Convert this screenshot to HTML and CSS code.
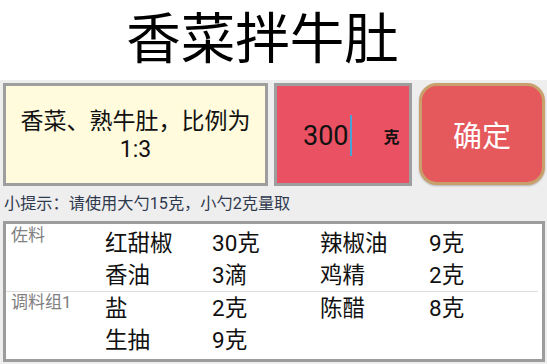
FILE: index.html
```html
<!DOCTYPE html>
<html lang="zh">
<head>
<meta charset="utf-8">
<title>香菜拌牛肚</title>
<link rel="stylesheet" href="styles.css">
</head>
<body>
<header class="header"><h1 class="title">香菜拌牛肚</h1></header>
<main class="main">
  <div class="toprow">
    <div class="ratio">香菜、熟牛肚，比例为<br>1:3</div>
    <div class="amount"><span class="num">300</span><span class="cursor"></span><span class="unit">克</span></div>
    <button class="ok">确定</button>
  </div>
  <p class="hint">小提示：请使用大勺15克，小勺2克量取</p>
  <div class="table">
    <div class="group first">
      <div class="label">佐料</div>
      <div class="items">
        <span>红甜椒</span><span>30克</span><span>辣椒油</span><span>9克</span>
        <span>香油</span><span>3滴</span><span>鸡精</span><span>2克</span>
      </div>
    </div>
    <div class="sep"></div>
    <div class="group">
      <div class="label">调料组1</div>
      <div class="items">
        <span>盐</span><span>2克</span><span>陈醋</span><span>8克</span>
        <span>生抽</span><span>9克</span>
      </div>
    </div>
  </div>
</main>
</body>
</html>
```

FILE: styles.css
```css
* { box-sizing: border-box; }
html, body { margin: 0; padding: 0; }
body {
  width: 547px;
  height: 364px;
  overflow: hidden;
  font-family: Roboto, "Noto Sans CJK SC", sans-serif;
  background: #eeeeee;
}
.header {
  height: 80px;
  background: #ffffff;
  display: flex;
  align-items: center;
  justify-content: center;
  padding-right: 22px;
}
.title {
  margin: 0;
  font-size: 54.5px;
  font-weight: normal;
  line-height: 1;
  color: #000;
  padding-bottom: 2px;
}
.main {
  padding: 3px 2px 0 3px;
}
.toprow {
  display: flex;
  height: 103px;
}
.ratio {
  width: 265px;
  border: 3px solid #9e9e9e;
  background: #fffbdc;
  display: flex;
  align-items: center;
  justify-content: center;
  text-align: center;
  font-size: 23px;
  line-height: 28px;
  color: #111;
  padding-top: 2px;
}
.amount {
  width: 138px;
  margin-left: 6px;
  border: 3px solid #9e9e9e;
  background: #ea5264;
  display: flex;
  align-items: center;
  padding-left: 26px;
  padding-top: 2px;
}
.num {
  font-size: 27px;
  color: #111;
}
.cursor {
  width: 2px;
  height: 41px;
  background: #4aa3d6;
  margin-left: 1px;
}
.unit {
  font-size: 16px;
  font-weight: bold;
  color: #111;
  margin-left: 32px;
}
.ok {
  width: 126px;
  height: 102px;
  margin-left: 7px;
  border: 3px solid #c9a06c;
  border-radius: 18px;
  background: #e5585b;
  color: #ffffff;
  font-family: Roboto, "Noto Sans CJK SC", sans-serif;
  font-size: 29px;
  padding: 0;
  box-shadow: 0 1px 2px rgba(0,0,0,0.25);
}
.hint {
  margin: 0;
  height: 35px;
  padding-left: 1px;
  font-size: 16.2px;
  line-height: 35px;
  color: #2f3a4f;
}
.table {
  width: 542px;
  height: 141px;
  border: 3px solid #9c9c9c;
  background: #ffffff;
}
.group {
  display: flex;
}
.group.first {
  padding-top: 3px;
  height: 67px;
}
.label {
  width: 99px;
  padding-left: 5px;
  font-size: 17px;
  line-height: 20px;
  color: #808080;
}
.group.first .label { margin-top: -2px; }
.items {
  display: grid;
  grid-template-columns: 107px 108px 109px 100px;
  grid-auto-rows: 32px;
  font-size: 22.5px;
  line-height: 32px;
  color: #111;
}
.sep {
  height: 1px;
  margin-right: 4px;
  background: #dddddd;
}
```
